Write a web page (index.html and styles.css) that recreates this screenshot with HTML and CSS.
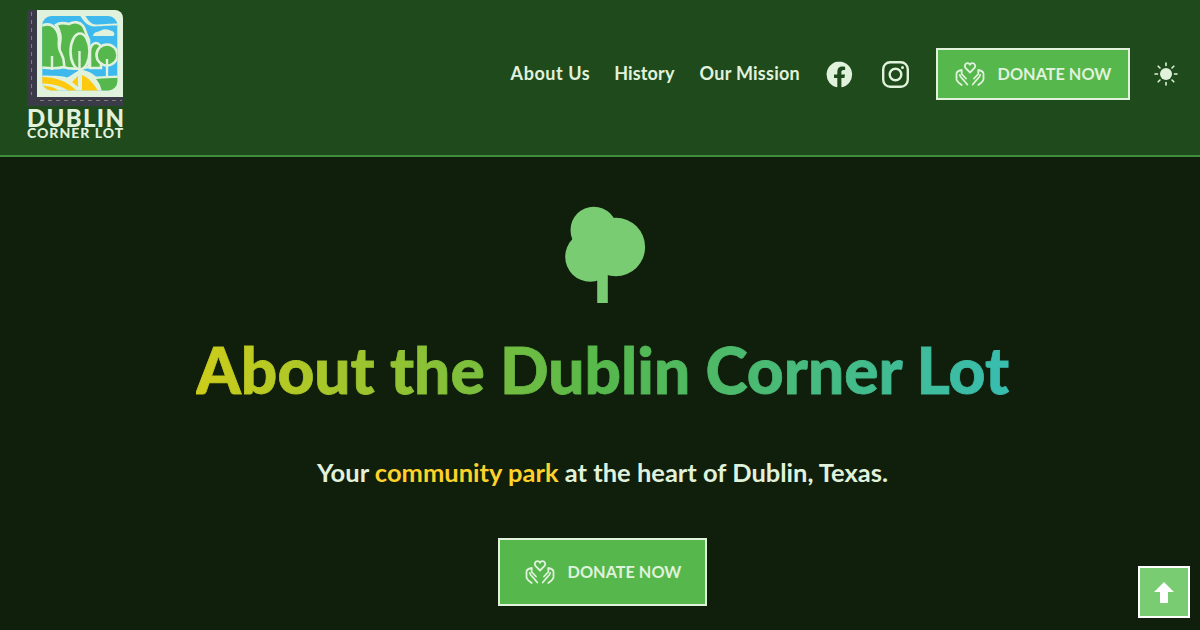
FILE: index.html
```html
<!DOCTYPE html>
<html lang="en">
<head>
<meta charset="utf-8">
<title>About the Dublin Corner Lot</title>
<link rel="stylesheet" href="styles.css">
</head>
<body>
<header class="site-header">
  <a class="brand" href="#">
    <svg class="brand-mark" viewBox="0 0 96 96" aria-hidden="true">
      <defs><clipPath id="scene"><rect x="15.300" y="6" width="75" height="74.500" rx="9"/></clipPath></defs>
      <path class="road" d="M0 0H10V87H96V96H0Z"/>
      <path class="panel" d="M10 0H88a8 8 0 0 1 8 8V87H10Z"/>
      <g clip-path="url(#scene)">
        <rect class="sky" x="15" y="6" width="76" height="75"/>
        <path class="outline-fill" d="M52 4C56 10 60 17 68 16.500C76 16 82 15.500 92 15.500V13.500C82 13.500 76 14.500 69 14.500C63 14.500 60 8 57 4Z"/>
        <path class="outline-fill" d="M66 26C67 21 71 22.500 74 20.500C78 18 82 20 85 21C88 22 88 26 86 26Z"/>
        <path class="green-o" d="M29 15C33 12 38 13 42 14C47 11 53 12 56 16C58 19 59 24 62 30V57C52 59 42 59 36 57C38 52 35 48 33 42C31 36 35 30 33 24C32 20 31 17 29 15Z"/>
        <path class="green-o" d="M10 20C12 16 19 13 24 15C29 17 32 23 32 29C32 34 31 37 33 41C35 45 38 49 37 57C30 59 18 58 10 57Z"/>
        <path class="stem" d="M25 46V60"/>
        <path class="green-o" d="M63 58V42C63 36 66 33 69 33C73 33 74 36 74 42V58Z"/>
        <circle class="green-o" cx="80" cy="45" r="10.500"/>
        <path class="stem" d="M80 49V66"/>
        <ellipse class="green-o" cx="53" cy="41.500" rx="9.500" ry="18"/>
        <path class="stem" d="M52.500 41V72"/>
        <path class="ground" d="M10 65.500C28 65.500 36 66 40 67.500C46 65 50 60 55 60C60 60 66 64 69 66.500C77 66 84 66 92 65.500V90H10Z"/>
        <path class="yellow" d="M13 67C27 67 39 70 50 81H42C34 76 25 73.500 13 73.500Z"/>
        <path class="yellow" d="M13 75.500C21 75.500 27 77 32 81H13Z"/>
        <path class="yellow" d="M45 72L51 66V77Z"/>
        <path class="yellow" d="M55 65C62 68 67 74 71 81H55Z"/>
        <path class="grass" d="M69 69C78 68 84 68 92 68V82H75C74 77 72 72 69 69Z"/>
      </g>
      <path class="road-dash" d="M4.500 2V85M13 90.500H95"/>
    </svg>
    <span class="brand-top">DUBLIN</span>
    <span class="brand-sub">CORNER LOT</span>
  </a>
  <nav class="site-nav">
    <a class="nav-link nav-about" href="#">About Us</a>
    <a class="nav-link nav-history" href="#">History</a>
    <a class="nav-link nav-mission" href="#">Our Mission</a>
    <a class="social" href="#" aria-label="Facebook">
      <svg viewBox="0 0 27 27" width="27" height="27"><path class="solid" d="M13.500 0.500a13 13 0 0 0-2.200 25.800V17.100H8V13.500h3.300v-2.800c0-3.300 1.900-5.100 4.900-5.100 1.400 0 2.900.3 2.900.3v3.200h-1.600c-1.600 0-2.100 1-2.100 2v2.400h3.600l-.6 3.600h-3v9.200a13 13 0 0 0-2.200-25.800Z"/></svg>
    </a>
    <a class="social" href="#" aria-label="Instagram">
      <svg viewBox="0 0 27 27" width="27" height="27"><rect class="line" x="1.200" y="1.200" width="24.600" height="24.600" rx="7"/><circle class="line" cx="13.500" cy="13.500" r="5.800"/><circle class="solid" cx="20.500" cy="6.500" r="1.500"/></svg>
    </a>
    <a class="donate" href="#">
      <svg class="hands" viewBox="0 0 30 26" width="30" height="26"><use href="#hands-art"/></svg>
      <span>DONATE NOW</span>
    </a>
    <button class="theme" aria-label="Toggle theme">
      <svg viewBox="0 0 24 24" width="24" height="24"><circle class="solid" cx="12" cy="12" r="6"/><path class="ray" d="M12 1V3.500M12 20.500V23M1 12H3.500M20.500 12H23M4.200 4.200L6 6M18 18L19.800 19.800M4.200 19.800L6 18M18 6L19.800 4.200"/></svg>
    </button>
  </nav>
</header>
<main class="hero">
  <svg class="hero-tree" viewBox="-2.500 0 90 100" width="90" height="100" aria-hidden="true">
    <rect x="36.700" y="45" width="10.600" height="53"/>
    <circle cx="33.300" cy="25" r="23.300"/>
    <circle cx="55.300" cy="42" r="29.300"/>
    <circle cx="29.700" cy="51.700" r="25"/>
  </svg>
  <h1 class="hero-title">About the Dublin Corner Lot</h1>
  <p class="hero-lead">Your <span class="accent">community park</span> at the heart of Dublin, Texas.</p>
  <a class="donate donate-large" href="#">
    <svg class="hands" viewBox="0 0 30 26" width="30" height="26">
      <g id="hands-art">
        <path class="hand" d="M15 11.500L10.700 7.200C8.800 5.200 10.200 2.200 12.600 2.200C13.700 2.200 14.500 2.800 15 3.700C15.500 2.800 16.300 2.200 17.400 2.200C19.800 2.200 21.200 5.200 19.300 7.200Z"/>
        <path class="hand" d="M6.700 9C3.500 9.500 1.500 10.800 1.500 13V18C1.500 20.500 4 22 6.700 24M6.700 9V13L11 17.500M4.800 14C5 16 7 17.500 8.500 19L12.300 23.500"/>
        <path class="hand" d="M23.300 9C26.500 9.500 28.500 10.800 28.500 13V18C28.500 20.500 26 22 23.300 24M23.300 9V13L19 17.500M25.200 14C25 16 23 17.500 21.500 19L17.700 23.500"/>
      </g>
    </svg>
    <span>DONATE NOW</span>
  </a>
</main>
<a class="to-top" href="#" aria-label="Back to top">
  <svg viewBox="0 0 20 21" width="20" height="21"><path d="M10 0L20 10H14V21H6V10H0Z"/></svg>
</a>
</body>
</html>
```

FILE: styles.css
```css
* { box-sizing: border-box; }
html, body { margin: 0; height: 100%; }
body {
  background: #0f1f0c;
  color: #e0f2dc;
  font-family: "Lato", "Liberation Sans", sans-serif;
  overflow: hidden;
}
a { color: inherit; text-decoration: none; }

.site-header {
  height: 157px;
  background: #1f4a1b;
  border-bottom: 2px solid #3f8f3a;
  display: flex;
  justify-content: space-between;
  align-items: flex-start;
  padding: 10px 22px 0 27px;
}
.brand { display: flex; flex-direction: column; width: 97px; font-weight: 900; }
.brand-mark { width: 96px; height: 96px; display: block; }
.brand-top { font-size: 24px; line-height: 19px; margin-top: 2px; letter-spacing: 1.300px; white-space: nowrap; }
.brand-sub { font-size: 14px; line-height: 12px; letter-spacing: 1px; white-space: nowrap; }

.road { fill: #3b3a48; }
.road-dash { fill: none; stroke: #7f7e6d; stroke-width: 1; stroke-dasharray: 4 4; }
.panel { fill: #e0f2dc; }
.sky { fill: #3db9ee; }
.outline-fill, .ground { fill: #e0f2dc; }
.green-o { fill: #56b84c; stroke: #e0f2dc; stroke-width: 2.600; }
.stem { fill: none; stroke: #e0f2dc; stroke-width: 2.400; }
.yellow { fill: #fec90f; }
.grass { fill: #56b84c; }

.site-nav { display: flex; align-items: center; height: 128px; }
.nav-link { font-size: 18px; font-weight: 700; padding-bottom: 2px; white-space: nowrap; }
.nav-about { letter-spacing: 0.550px; margin-right: 24px; }
.nav-history { letter-spacing: 0.150px; margin-right: 25px; }
.nav-mission { letter-spacing: 0.250px; margin-right: 26px; }
.social { display: flex; margin-right: 29px; }
.social + .donate { margin-left: -2px; }
.solid { fill: #e0f2dc; }
.line { fill: none; stroke: #e0f2dc; stroke-width: 2.400; }
.ray { fill: none; stroke: #e0f2dc; stroke-width: 1.600; stroke-linecap: round; }

.donate {
  display: flex;
  align-items: center;
  justify-content: center;
  gap: 13px;
  width: 194px;
  height: 52px;
  background: #56b84c;
  border: 2px solid #e0f2dc;
  font-size: 16.300px;
  font-weight: 700;
  white-space: nowrap;
}
.donate span { padding-bottom: 2px; }
.hand { fill: none; stroke: #e0f2dc; stroke-width: 1.800; stroke-linecap: round; stroke-linejoin: round; }
.theme { margin-left: 24px; padding: 0; border: 0; background: none; display: flex; }

.hero {
  display: flex;
  flex-direction: column;
  align-items: center;
  padding: 48px 0 0 5px;
}
.hero-tree { fill: #79cc72; display: block; }
.hero-title {
  margin: 28px 0 0;
  font-size: 64px;
  line-height: 74px;
  font-weight: 900;
  background: linear-gradient(90deg, #cdcd1a, #56b84c 50%, #38bdb0);
  -webkit-background-clip: text;
  background-clip: text;
  color: transparent;
  -webkit-text-stroke: 0.800px transparent;
  white-space: nowrap;
}
.hero-lead { margin: 49px 0 0; font-size: 25.500px; line-height: 32px; font-weight: 700; white-space: nowrap; }
.accent { color: #fdd22a; }
.donate-large { width: 209px; height: 68px; margin-top: 50px; padding-left: 1px; }

.to-top {
  position: fixed;
  left: 1138px;
  top: 566px;
  width: 52px;
  height: 52px;
  background: #79cc72;
  border: 2px solid #fff;
  display: flex;
  align-items: center;
  justify-content: center;
}
.to-top svg { fill: #fff; }
```
